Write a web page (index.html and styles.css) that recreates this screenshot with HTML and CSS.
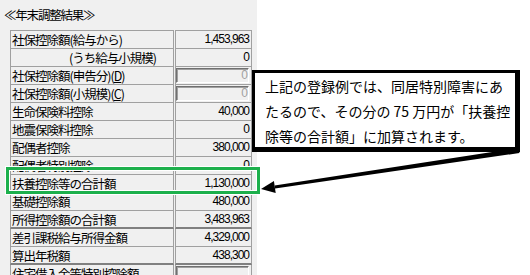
FILE: index.html
```html
<!DOCTYPE html>
<html lang="ja">
<head>
  <meta charset="UTF-8">
  <title>年末調整結果</title>
  <link rel="stylesheet" href="styles.css">
</head>
<body>
  <section class="panel">
    <h1 class="title">≪年末調整結果≫</h1>
    <div class="result-table">
      <div class="row"><div class="label">社保控除額(給与から)</div><div class="value">1,453,963</div></div>
      <div class="row"><div class="label indent">(うち給与小規模)</div><div class="value">0</div></div>
      <div class="row"><div class="label">社保控除額(申告分)(<u>D</u>)</div><div class="value"><div class="field">0</div></div></div>
      <div class="row"><div class="label">社保控除額(小規模)(<u>C</u>)</div><div class="value"><div class="field">0</div></div></div>
      <div class="row"><div class="label">生命保険料控除</div><div class="value">40,000</div></div>
      <div class="row"><div class="label">地震保険料控除</div><div class="value">0</div></div>
      <div class="row"><div class="label">配偶者控除</div><div class="value">380,000</div></div>
      <div class="row"><div class="label">配偶者特別控除</div><div class="value">0</div></div>
      <div class="row"><div class="label">扶養控除等の合計額</div><div class="value">1,130,000</div></div>
      <div class="row"><div class="label">基礎控除額</div><div class="value">480,000</div></div>
      <div class="row total"><div class="label">所得控除額の合計額</div><div class="value">3,483,963</div></div>
      <div class="row"><div class="label">差引課税給与所得金額</div><div class="value">4,329,000</div></div>
      <div class="row total"><div class="label">算出年税額</div><div class="value">438,300</div></div>
      <div class="row"><div class="label">住宅借入金等特別控除額</div><div class="value"><div class="field"></div></div></div>
    </div>
  </section>

  <!-- highlight around the 扶養控除 row -->
  <div class="highlight"></div>

  <div class="callout">
    上記の登録例では、同居特別障害にあ<br>
    たるので、その分の 75 万円が「扶養控<br>
    除等の合計額」に加算されます。
  </div>

  <svg class="arrow" width="530" height="275" viewBox="0 0 530 275">
    <polygon points="518.6,148 519.4,153 275,188.4 274.6,185.4" fill="#000"/>
    <polygon points="261,189 273.9,181 275.7,193" fill="#000"/>
  </svg>
</body>
</html>
```

FILE: styles.css
```css
body {
  margin: 0;
  width: 530px;
  height: 275px;
  overflow: hidden;
  background: #ffffff;
  font-family: "Noto Sans CJK JP", sans-serif;
  color: #000;
  position: relative;
}

.panel {
  width: 257px;
  height: 275px;
  background-color: #f0f0f0;
  overflow: hidden;
}

.title {
  margin: 0;
  padding: 8px 0 0 4px;
  height: 22px;
  box-sizing: border-box;
  font-size: 12.5px;
  line-height: 14px;
  font-weight: normal;
  letter-spacing: -1.2px;
}

.result-table {
  margin: 8px 0 0 10px;
}

.row {
  display: grid;
  grid-template-columns: 164px 77px;
  column-gap: 1px;
  height: 18px;
}

.label, .value {
  box-sizing: border-box;
  height: 18px;
  border: 1px solid #a0a0a0;
  border-top: none;
  line-height: 17px;
  white-space: nowrap;
  overflow: hidden;
}

.row:first-child .label,
.row:first-child .value {
  border-top: 1px solid #a0a0a0;
  height: 19px;
}

.row:first-child {
  height: 19px;
}

.label {
  font-size: 12.5px;
  letter-spacing: -1px;
  padding-left: 1px;
}

.label.indent {
  padding-left: 58px;
}

.value {
  text-align: right;
  padding-right: 2px;
  font-family: "Liberation Sans", sans-serif;
  font-size: 12px;
  letter-spacing: -1px;
}

.row.total .label,
.row.total .value {
  border-bottom: 2px solid #808080;
}

.field {
  box-sizing: border-box;
  height: 15px;
  margin: 1px 0 0 0;
  border: 1px solid;
  border-color: #707070 #ffffff #ffffff #707070;
  box-shadow: inset 1px 1px 0 #a0a0a0;
  color: #a0a0a0;
  line-height: 13px;
  padding-right: 1px;
}

.highlight {
  position: absolute;
  left: 5px;
  top: 166px;
  width: 256px;
  height: 29px;
  box-sizing: border-box;
  border: 1px solid #ffffff;
  box-shadow: inset 0 0 0 3px #1db04c, inset 0 0 0 4px #ffffff;
}

.callout {
  position: absolute;
  left: 252px;
  top: 70px;
  width: 268px;
  height: 82px;
  box-sizing: border-box;
  background: #ffffff;
  border-style: solid;
  border-color: #000;
  border-width: 3px 5px 5px 3px;
  padding: 1px 0 0 10px;
  font-size: 14px;
  line-height: 25px;
  white-space: nowrap;
}

.arrow {
  position: absolute;
  left: 0;
  top: 0;
  pointer-events: none;
}
```
